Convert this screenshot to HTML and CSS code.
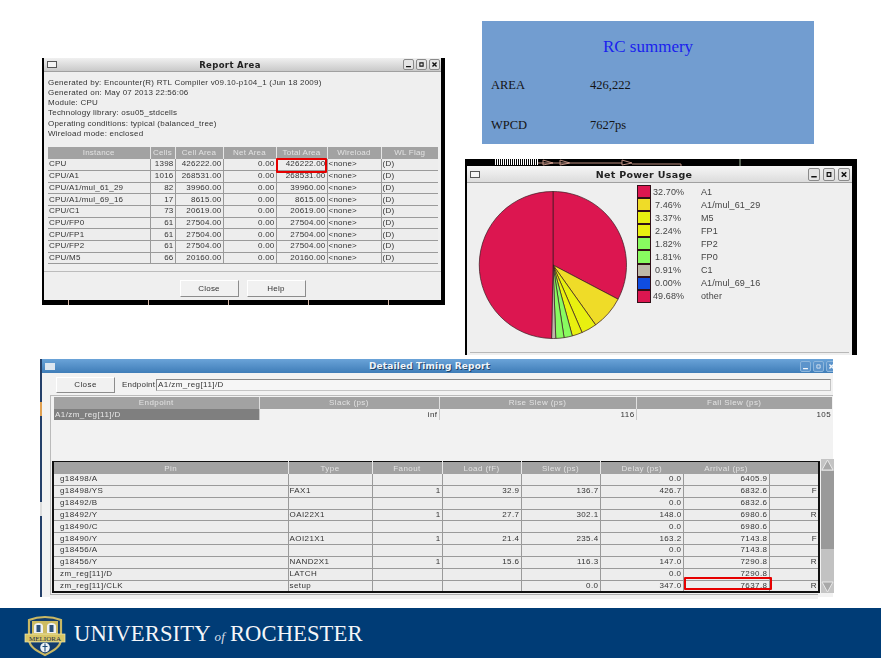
FILE: index.html
```html
<!DOCTYPE html>
<html>
<head lang="en">
    <meta charset="UTF-8">
    <title>RC summery</title>
    <link rel="stylesheet" href="styles.css">
</head>
<body>
<div class="slide">
    <div class="canvas">
        <!-- report area window -->
        <div class="shot shot-area">
            <div class="win">
                <div class="titlebar">
                    <span class="menu-box"></span>
                    <span class="title">Report Area</span>
                    <svg class="btn-box" viewBox="0 0 11 11"><path d="M2.5 8H8.5" stroke="#111" stroke-width="1.6"/></svg>
                    <svg class="btn-box" viewBox="0 0 11 11"><path d="M3.5 3.5H7.5V7.5H3.5Z" fill="none" stroke="#111" stroke-width="1.3"/></svg>
                    <svg class="btn-box" viewBox="0 0 11 11"><path d="M3 3L8 8M8 3L3 8" stroke="#111" stroke-width="1.7"/></svg>
                </div>
                <div class="info">
                    <div>Generated by: Encounter(R) RTL Compiler v09.10-p104_1 (Jun 18 2009)</div>
                    <div>Generated on: May 07 2013 22:56:06</div>
                    <div>Module: CPU</div>
                    <div>Technology library: osu05_stdcells</div>
                    <div>Operating conditions: typical (balanced_tree)</div>
                    <div>Wireload mode: enclosed</div>
                </div>
                <table class="grid area-grid">
                    <colgroup><col class="a1"><col class="a2"><col class="a3"><col class="a4"><col class="a5"><col class="a6"><col class="a7"></colgroup>
                    <tr><th>Instance</th><th>Cells</th><th>Cell Area</th><th>Net Area</th><th>Total Area</th><th>Wireload</th><th>WL Flag</th></tr>
                    <tr><td>CPU</td><td class="num">1398</td><td class="num">426222.00</td><td class="num">0.00</td><td class="num">426222.00</td><td>&lt;none&gt;</td><td>(D)</td></tr>
                    <tr><td>CPU/A1</td><td class="num">1016</td><td class="num">268531.00</td><td class="num">0.00</td><td class="num">268531.00</td><td>&lt;none&gt;</td><td>(D)</td></tr>
                    <tr><td>CPU/A1/mul_61_29</td><td class="num">82</td><td class="num">39960.00</td><td class="num">0.00</td><td class="num">39960.00</td><td>&lt;none&gt;</td><td>(D)</td></tr>
                    <tr><td>CPU/A1/mul_69_16</td><td class="num">17</td><td class="num">8615.00</td><td class="num">0.00</td><td class="num">8615.00</td><td>&lt;none&gt;</td><td>(D)</td></tr>
                    <tr><td>CPU/C1</td><td class="num">73</td><td class="num">20619.00</td><td class="num">0.00</td><td class="num">20619.00</td><td>&lt;none&gt;</td><td>(D)</td></tr>
                    <tr><td>CPU/FP0</td><td class="num">61</td><td class="num">27504.00</td><td class="num">0.00</td><td class="num">27504.00</td><td>&lt;none&gt;</td><td>(D)</td></tr>
                    <tr><td>CPU/FP1</td><td class="num">61</td><td class="num">27504.00</td><td class="num">0.00</td><td class="num">27504.00</td><td>&lt;none&gt;</td><td>(D)</td></tr>
                    <tr><td>CPU/FP2</td><td class="num">61</td><td class="num">27504.00</td><td class="num">0.00</td><td class="num">27504.00</td><td>&lt;none&gt;</td><td>(D)</td></tr>
                    <tr><td>CPU/M5</td><td class="num">66</td><td class="num">20160.00</td><td class="num">0.00</td><td class="num">20160.00</td><td>&lt;none&gt;</td><td>(D)</td></tr>
                </table>
                <div class="area-foot">
                    <span class="push">Close</span>
                    <span class="push">Help</span>
                </div>
            </div>
            <div class="mark mark-area"></div>
        </div>

        <!-- summary box -->
        <div class="summary">
            <div class="summary-head">RC summery</div>
            <div class="summary-row"><span class="summary-key">AREA</span><span>426,222</span></div>
            <div class="summary-row"><span class="summary-key">WPCD</span><span>7627ps</span></div>
        </div>

        <!-- power window -->
        <div class="shot shot-power">
            <svg class="netlist" width="392" height="7" viewBox="0 0 392 7">
                <path transform="translate(0.5 0)" d="M30 0V6M32 0V6M34 0V6M36 0V6M38 0V6M40 0V6M42 0V6M44 0V6M46 0V6M48 0V6M50 0V6M52 0V6M54 0V6M56 0V6M58 0V6M60 0V6M62 0V6M64 0V6M66 0V6M68 0V6M70 0V6M72 0V6" stroke="#fff" stroke-width="1"/>
                <path d="M73 4H104M78 1L88 4L78 6ZM95 1L105 4L95 6ZM105 4H157M157 1L167 4L157 6ZM167 5H216V7" fill="none" stroke="#e8b0a0" stroke-width="0.8"/>
                <path d="M275 0V7" stroke="#cde8c8" stroke-width="0.8"/>
            </svg>
            <div class="win">
                <div class="titlebar titlebar-big">
                    <span class="menu-box"></span>
                    <span class="title">Net Power Usage</span>
                    <svg class="btn-box" viewBox="0 0 11 11"><path d="M2.5 8H8.5" stroke="#111" stroke-width="1.6"/></svg>
                    <svg class="btn-box" viewBox="0 0 11 11"><path d="M3.5 3.5H7.5V7.5H3.5Z" fill="none" stroke="#111" stroke-width="1.3"/></svg>
                    <svg class="btn-box" viewBox="0 0 11 11"><path d="M3 3L8 8M8 3L3 8" stroke="#111" stroke-width="1.7"/></svg>
                </div>
                <div class="power-body">
                    <svg class="pie" width="150" height="150" viewBox="-75 -75 150 150">
                        <g stroke="#3a1a20" stroke-width="0.7">
                            <path fill="#dc1650" d="M0 0V-73.5A73.5 73.5 0 0 1 65.06 34.19Z"/>
                            <path fill="#efdc28" d="M0 0L65.06 34.19A73.5 73.5 0 0 1 42.61 59.89Z"/>
                            <path fill="#e8f010" d="M0 0L42.61 59.89A73.5 73.5 0 0 1 29.06 67.51Z"/>
                            <path fill="#e8f010" d="M0 0L29.06 67.51A73.5 73.5 0 0 1 19.31 70.92Z"/>
                            <path fill="#88fb60" d="M0 0L19.31 70.92A73.5 73.5 0 0 1 11.09 72.66Z"/>
                            <path fill="#88fb60" d="M0 0L11.09 72.66A73.5 73.5 0 0 1 2.77 73.45Z"/>
                            <path fill="#bdb9a8" d="M0 0L2.77 73.45A73.5 73.5 0 0 1 -1.43 73.49Z"/>
                            <path fill="#dc1650" d="M0 0L-1.43 73.49A73.5 73.5 0 0 1 0 -73.5Z"/>
                        </g>
                    </svg>
                    <div class="legend">
                        <div class="legend-row"><i class="swatch s-red"></i><span class="pct">32.70%</span><span>A1</span></div>
                        <div class="legend-row"><i class="swatch s-gold"></i><span class="pct">7.46%</span><span>A1/mul_61_29</span></div>
                        <div class="legend-row"><i class="swatch s-yel"></i><span class="pct">3.37%</span><span>M5</span></div>
                        <div class="legend-row"><i class="swatch s-yel"></i><span class="pct">2.24%</span><span>FP1</span></div>
                        <div class="legend-row"><i class="swatch s-green"></i><span class="pct">1.82%</span><span>FP2</span></div>
                        <div class="legend-row"><i class="swatch s-green"></i><span class="pct">1.81%</span><span>FP0</span></div>
                        <div class="legend-row"><i class="swatch s-grey"></i><span class="pct">0.91%</span><span>C1</span></div>
                        <div class="legend-row"><i class="swatch s-blue"></i><span class="pct">0.00%</span><span>A1/mul_69_16</span></div>
                        <div class="legend-row"><i class="swatch s-red"></i><span class="pct">49.68%</span><span>other</span></div>
                    </div>
                </div>
                <div class="power-rule"></div>
            </div>
        </div>

        <!-- timing window -->
        <div class="shot shot-timing">
            <div class="titlebar titlebar-blue">
                <span class="menu-box menu-box-blue"></span>
                <span class="title">Detailed Timing Report</span>
                <svg class="btn-box btn-blue" viewBox="0 0 11 11"><path d="M2.5 8H8.5" stroke="#f2f6fa" stroke-width="1.6"/></svg>
                <svg class="btn-box btn-blue" viewBox="0 0 11 11"><path d="M3.5 3.5H7.5V7.5H3.5Z" fill="none" stroke="#dfe9f3" stroke-width="1"/></svg>
                <svg class="btn-box btn-blue btn-cut" viewBox="0 0 11 11"><path d="M3 3L8 8M8 3L3 8" stroke="#f2f6fa" stroke-width="1.7"/></svg>
            </div>
            <div class="toolbar">
                <span class="push push-close">Close</span>
                <span class="end-label">Endpoint:</span>
                <span class="end-input">A1/zm_reg[11]/D</span>
            </div>
            <div class="timing-frame">
                <table class="grid end-grid">
                    <colgroup><col class="e1"><col class="e2"><col class="e3"><col class="e4"></colgroup>
                    <tr><th>Endpoint</th><th>Slack (ps)</th><th>Rise Slew (ps)</th><th>Fall Slew (ps)</th></tr>
                    <tr><td class="picked">A1/zm_reg[11]/D</td><td class="num">inf</td><td class="num">116</td><td class="num">105</td></tr>
                </table>
                <div class="path-wrap">
                    <table class="grid path-grid">
                        <colgroup><col class="p1"><col class="p2"><col class="p3"><col class="p4"><col class="p5"><col class="p6"><col class="p7"><col class="p8"></colgroup>
                        <tr><th>Pin</th><th>Type</th><th>Fanout</th><th>Load (fF)</th><th>Slew (ps)</th><th class="no-rule">Delay (ps)</th><th class="no-rule">Arrival (ps)</th><th></th></tr>
                        <tr><td class="pin">g18498/A</td><td></td><td></td><td></td><td></td><td class="num">0.0</td><td class="num">6405.9</td><td></td></tr>
                        <tr><td class="pin">g18498/YS</td><td>FAX1</td><td class="num">1</td><td class="num">32.9</td><td class="num">136.7</td><td class="num">426.7</td><td class="num">6832.6</td><td class="num">F</td></tr>
                        <tr><td class="pin">g18492/B</td><td></td><td></td><td></td><td></td><td class="num">0.0</td><td class="num">6832.6</td><td></td></tr>
                        <tr><td class="pin">g18492/Y</td><td>OAI22X1</td><td class="num">1</td><td class="num">27.7</td><td class="num">302.1</td><td class="num">148.0</td><td class="num">6980.6</td><td class="num">R</td></tr>
                        <tr><td class="pin">g18490/C</td><td></td><td></td><td></td><td></td><td class="num">0.0</td><td class="num">6980.6</td><td></td></tr>
                        <tr><td class="pin">g18490/Y</td><td>AOI21X1</td><td class="num">1</td><td class="num">21.4</td><td class="num">235.4</td><td class="num">163.2</td><td class="num">7143.8</td><td class="num">F</td></tr>
                        <tr><td class="pin">g18456/A</td><td></td><td></td><td></td><td></td><td class="num">0.0</td><td class="num">7143.8</td><td></td></tr>
                        <tr><td class="pin">g18456/Y</td><td>NAND2X1</td><td class="num">1</td><td class="num">15.6</td><td class="num">116.3</td><td class="num">147.0</td><td class="num">7290.8</td><td class="num">R</td></tr>
                        <tr><td class="pin">zm_reg[11]/D</td><td>LATCH</td><td></td><td></td><td></td><td class="num">0.0</td><td class="num">7290.8</td><td></td></tr>
                        <tr><td class="pin">zm_reg[11]/CLK</td><td>setup</td><td></td><td></td><td class="num">0.0</td><td class="num">347.0</td><td class="num">7637.8</td><td class="num">R</td></tr>
                    </table>
                    <div class="vscroll">
                        <svg class="arrow" width="13" height="12" viewBox="0 0 13 12"><path fill="#a8a8a8" stroke="#e8e8e8" d="M6.5 1L12 11H1Z"/></svg>
                        <div class="thumb"></div>
                        <div class="rest"></div>
                        <svg class="arrow" width="13" height="12" viewBox="0 0 13 12"><path fill="#a8a8a8" stroke="#e8e8e8" d="M6.5 11L12 1H1Z"/></svg>
                    </div>
                </div>
                <div class="hscroll"></div>
            </div>
            <div class="mark mark-timing"></div>
        </div>
    </div>

    <div class="footer">
        <svg class="crest" width="42" height="42" viewBox="0 0 42 42">
            <path fill="#123c6c" stroke="#c9b864" stroke-width="2.2" d="M5 5C10 3 14 2 21 2C28 2 32 3 37 5V24C37 32 29 36 21 40C13 36 5 32 5 24Z"/>
            <rect x="8" y="6" width="26" height="13" fill="#cdbb62"/>
            <path d="M10 18V11C10 7 19 7 19 11V18Z" fill="#eef1f4"/>
            <path d="M23 18V11C23 7 32 7 32 11V18Z" fill="#eef1f4"/>
            <rect x="12.5" y="10" width="4" height="7" fill="#2b5078"/>
            <rect x="25.5" y="10" width="4" height="7" fill="#2b5078"/>
            <rect x="1" y="19" width="40" height="8" fill="#d8c666" stroke="#f0e8b0" stroke-width="0.7"/>
            <text class="crest-word" x="21" y="25.8" text-anchor="middle">MELIORA</text>
            <circle cx="21" cy="32.5" r="4.8" fill="#eef1f4"/>
            <path d="M21 28.5V36.5M18.5 31.5H23.5" stroke="#1e4a78" stroke-width="1.1"/>
        </svg>
        <div class="wordmark">UNIVERSITY<span class="wm-of">of</span>ROCHESTER</div>
    </div>
</div>
</body>
</html>
```

FILE: styles.css
```css
*{
    margin: 0;
    padding: 0;
    box-sizing: border-box;
}
html,body{
    background: #fff;
}
body{
    width: 881px;
    height: 658px;
    overflow: hidden;
}
.slide{
    width: 881px;
    height: 658px;
    display: flex;
    flex-direction: column;
}
.canvas{
    height: 608px;
    position: relative;
}

/* screenshots pasted on the slide */
.shot{
    position: absolute;
    font-family: "Liberation Sans", sans-serif;
    font-size: 8px;
    letter-spacing: 0.42px;
    color: #333;
    filter: blur(0.35px);
}
.shot-area{
    left: 42px;
    top: 58px;
    width: 403px;
    height: 247px;
    background: #000;
    padding: 0 4px 5px 2px;
    letter-spacing: 0.22px;
}
.shot-area::after{
    content: "";
    position: absolute;
    left: 26px;
    right: 0;
    bottom: 0;
    height: 5px;
    background: repeating-linear-gradient(90deg, #d8b8a8 0 1px, transparent 1px 80px);
}
.shot-power{
    left: 465px;
    top: 159px;
    width: 392px;
    height: 196px;
    background: #000;
    padding: 7px 5px 0 2px;
}
.netlist{
    position: absolute;
    left: 0;
    top: 0;
}
.shot-timing{
    left: 42px;
    top: 359px;
    width: 791px;
    height: 238px;
    background: #f2f2f2;
    display: flex;
    flex-direction: column;
}
.shot-timing::before{
    content: "";
    position: absolute;
    left: -2px;
    top: 0;
    bottom: 0;
    width: 2px;
    background: linear-gradient(#24406a 0 18%, #e0a050 18% 24%, #24406a 24% 60%, #ddd 60% 66%, #24406a 66% 100%);
}
.win{
    height: 100%;
    background: #efefef;
    display: flex;
    flex-direction: column;
}

/* title bars */
.titlebar{
    height: 14px;
    flex: none;
    display: flex;
    align-items: center;
    padding: 0 1px 0 3px;
    gap: 2px;
    background: linear-gradient(#f0f0f0, #c9c9c9);
    border-bottom: 1px solid #a0a0a0;
}
.titlebar-big{
    height: 17px;
    gap: 3px;
    padding-right: 2px;
    background: linear-gradient(#f6f6f6, #dcdcdc);
}
.titlebar-big .btn-box{
    width: 12px;
    height: 13px;
}
.titlebar-blue{
    background: linear-gradient(#6aa3d8, #3f7db8);
    border-bottom: 0;
    padding: 0 0 0 3px;
    overflow: hidden;
}
.title{
    flex: 1;
    text-align: center;
    font-family: "DejaVu Sans", sans-serif;
    font-weight: bold;
    font-size: 8.5px;
    letter-spacing: 0.35px;
    color: #222;
}
.titlebar-big .title{
    font-size: 9.5px;
    letter-spacing: 0.3px;
}
.titlebar-blue .title{
    font-size: 9px;
    letter-spacing: 0.15px;
    color: #eef4fa;
    text-shadow: 1px 1px 0 #1e4468;
    padding-left: 4px;
}
.menu-box{
    width: 10px;
    height: 7px;
    border: 1px solid #555;
    background: #f4f4f4;
}
.menu-box-blue{
    border: 0;
    background: #dde6f0;
}
.btn-box{
    width: 11px;
    height: 11px;
    flex: none;
    border: 1px solid #8a8a8a;
    border-radius: 2px;
    background: #e4e4e4;
}
.btn-blue{
    background: #5c94cb;
    border-color: #8db6dc;
}
.btn-cut{
    margin-right: -4px;
}

/* report window */
.info{
    height: 75px;
    flex: none;
    padding: 5.5px 0 0 4px;
    line-height: 10.3px;
}
.grid{
    border-collapse: collapse;
    table-layout: fixed;
    background: #ededed;
}
.grid th{
    height: 11.7px;
    background: #a2a2a2;
    color: #e2e2e2;
    font-weight: normal;
    border-right: 1px solid #e6e6e6;
    padding: 0;
    overflow: hidden;
    white-space: nowrap;
}
.grid td{
    height: 11.7px;
    line-height: 10px;
    border-right: 1px solid #9a9a9a;
    border-bottom: 1px solid #9a9a9a;
    padding: 0 1px;
    overflow: hidden;
    white-space: nowrap;
}
.grid .num{
    text-align: right;
}
.grid th:last-child,.grid td:last-child{
    border-right: 0;
}
.area-grid{
    width: 390px;
    margin: 0 0 0 4px;
    flex: none;
}
.a1{width: 102px;}
.a2{width: 25px;}
.a3{width: 48px;}
.a4{width: 53px;}
.a5{width: 51px;}
.a6{width: 54px;}
.a7{width: 57px;}
.area-foot{
    margin-top: 7px;
    border-top: 1px solid #bcbcbc;
    display: flex;
    justify-content: center;
    gap: 8px;
    padding-top: 8px;
}
.push{
    width: 59px;
    height: 17px;
    line-height: 15px;
    text-align: center;
    background: #f1f1f1;
    border: 1px solid #8c8c8c;
    border-top-color: #fff;
    border-left-color: #fff;
}
.mark{
    position: absolute;
    border: 2px solid #e60000;
    border-radius: 1px;
}
.mark-area{
    left: 234px;
    top: 100px;
    width: 51px;
    height: 15px;
}

/* summary box */
.summary{
    position: absolute;
    left: 482px;
    top: 21px;
    width: 332px;
    height: 123px;
    background: #729dd0;
    font-family: "Liberation Serif", serif;
    font-size: 12.5px;
    color: #141414;
    padding: 16px 0 0 9px;
}
.summary-head{
    padding-right: 9px;
    text-align: center;
    font-size: 17px;
    line-height: 20px;
    color: #1a22ee;
    margin-bottom: 21px;
}
.summary-row{
    display: flex;
    line-height: 14px;
    margin-bottom: 26px;
}
.summary-key{
    width: 99px;
}

/* power window */
.power-body{
    display: flex;
    flex: 1;
}
.pie{
    margin: 7px 0 0 11px;
    flex: none;
}
.legend{
    margin: 2px 0 0 9px;
    font-size: 9px;
    letter-spacing: 0.1px;
    color: #444;
}
.legend-row{
    height: 13.1px;
    display: flex;
    align-items: center;
}
.swatch{
    width: 14px;
    height: 13.1px;
    border: 1px solid #301018;
    margin-right: 2px;
}
.s-red{background: #dc1650;}
.s-gold{background: #efdc28;}
.s-yel{background: #e8f010;}
.s-green{background: #88fb60;}
.s-grey{background: #bdb9a8;}
.s-blue{background: #0f4de0;}
.pct{
    width: 28px;
    margin-right: 20px;
    text-align: right;
}
.power-rule{
    height: 1px;
    margin: 0 3px 2px;
    background: #b8b8b8;
}

/* timing window */
.toolbar{
    height: 21px;
    flex: none;
    display: flex;
    align-items: center;
    padding: 2px 2px 0 14px;
}
.push-close{
    flex: none;
    height: 16px;
    line-height: 14px;
}
.end-label{
    margin-left: 7px;
    width: 34px;
    flex: none;
    letter-spacing: 0.2px;
}
.end-input{
    flex: 1;
    height: 12px;
    line-height: 10px;
    padding-left: 1px;
    background: #f6f6f6;
    border: 1px solid #c4c4c4;
    border-top-color: #888;
    border-left-color: #888;
}
.timing-frame{
    flex: 1;
    margin: 1px 0 0 8px;
    padding: 1px 1px 0 3px;
    border-left: 1px solid #bbb;
    border-top: 1px solid #bbb;
    display: flex;
    flex-direction: column;
}
.end-grid{
    width: 778px;
    background: transparent;
}
.end-grid td{
    border-bottom: 0;
    border-right: 1px solid #c8c8c8;
}
.end-grid th{
    border-right: 1px solid #e0e0e0;
}
.end-grid .picked{
    background: #7f7f7f;
    color: #e8e8e8;
}
.e1{width: 205px;}
.e2{width: 180px;}
.e3{width: 197px;}
.e4{width: 196px;}
.path-wrap{
    margin-top: 41px;
    display: flex;
    gap: 1px;
}
.path-grid{
    width: 766px;
    height: 130px;
    flex: none;
    box-sizing: content-box;
    border: 2px solid #111;
    border-width: 1.5px 2px 2px 2px;
    margin-left: -2px;
}
.path-grid .pin{
    padding-left: 6px;
}
.path-grid th.no-rule{
    border-right: 0;
}
.p1{width: 235px;}
.p2{width: 84px;}
.p3{width: 70px;}
.p4{width: 79px;}
.p5{width: 79px;}
.p6{width: 83px;}
.p7{width: 86px;}
.p8{width: 50px;}
.vscroll{
    width: 13px;
    height: 134px;
    margin-top: -2px;
    display: flex;
    flex-direction: column;
    background: #c4c4c4;
}
.arrow{
    flex: none;
}
.thumb{
    height: 78px;
    background: #9a9a9a;
}
.rest{
    flex: 1;
    background: #c2c2c2;
}
.hscroll{
    height: 5px;
    margin: 1px 14px 0 -4px;
    background: #f0f0f0;
    border-top: 1px solid #b0b0b0;
}
.mark-timing{
    left: 642px;
    top: 217.5px;
    width: 88px;
    height: 13.5px;
    border-width: 2.5px;
}

/* footer */
.footer{
    height: 50px;
    flex: none;
    background: #003c76;
    display: flex;
    align-items: center;
    padding-left: 24px;
}
.crest{
    flex: none;
    margin-top: 6px;
}
.crest-word{
    font-family: "Liberation Serif", serif;
    font-size: 7px;
    fill: #1a2c4a;
}
.wordmark{
    margin-left: 8px;
    margin-top: 1px;
    font-family: "Liberation Serif", serif;
    font-size: 22.6px;
    color: #f4f6f9;
    white-space: nowrap;
    letter-spacing: 0.1px;
}
.wm-of{
    font-style: italic;
    font-size: 13px;
    margin: 0 5px 0 4px;
    color: #d8dfe8;
}
```
